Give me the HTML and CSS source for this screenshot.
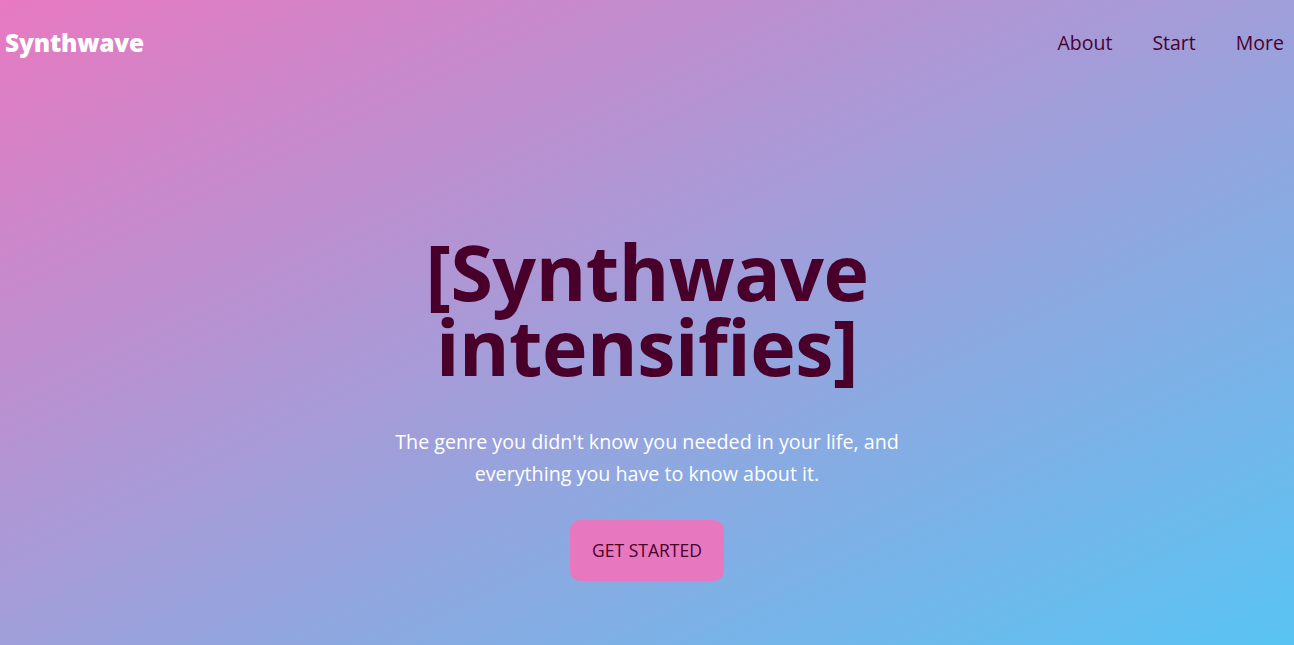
FILE: index.html
```html
<!DOCTYPE html>
<html lang="en">
<head>
<meta charset="utf-8">
<title>Synthwave</title>
<link rel="stylesheet" href="styles.css">
</head>
<body>
<div class="page">
  <header class="header">
    <div class="logo">Synthwave</div>
    <nav class="nav">
      <a href="#" class="nav-link">About</a>
      <a href="#" class="nav-link">Start</a>
      <a href="#" class="nav-link">More</a>
    </nav>
  </header>
  <main class="hero">
    <h1 class="hero-title">[Synthwave intensifies]</h1>
    <p class="hero-text">The genre you didn't know you needed in your life, and everything you have to know about it.</p>
    <a href="#" class="hero-button">GET STARTED</a>
  </main>
</div>
</body>
</html>
```
FILE: styles.css
```css
* { box-sizing: border-box; }
html, body { margin: 0; padding: 0; height: 100%; }
body {
  font-family: "Open Sans", "Noto Sans", sans-serif;
  background: linear-gradient(to bottom right, #e779c1, #58c4f3);
  overflow: hidden;
}
.page {
  min-height: 645px;
  display: flex;
  flex-direction: column;
}
.header {
  display: flex;
  justify-content: space-between;
  align-items: center;
  height: 84px;
  padding: 0 10px 0 5px;
}
.logo {
  color: #fff;
  font-weight: 800;
  font-size: 24.5px;
  letter-spacing: -0.2px;
}
.nav {
  display: flex;
  gap: 40px;
}
.nav-link {
  color: #4a0030;
  text-decoration: none;
  font-size: 19.5px;
}
.hero {
  display: flex;
  flex-direction: column;
  align-items: center;
  text-align: center;
  padding-top: 150px;
}
.hero-title {
  margin: 0;
  color: #48002b;
  font-size: 77px;
  line-height: 75px;
  font-weight: 700;
  max-width: 560px;
  letter-spacing: -0.5px;
}
.hero-text {
  margin: 42px 0 0;
  color: #fff;
  font-size: 19.7px;
  line-height: 32px;
  max-width: 540px;
}
.hero-button {
  display: block;
  margin-top: 30px;
  background: #e778c0;
  color: #48002b;
  text-decoration: none;
  font-size: 17.5px;
  padding: 18px 22px;
  line-height: 25px;
  border-radius: 10px;
}
```
